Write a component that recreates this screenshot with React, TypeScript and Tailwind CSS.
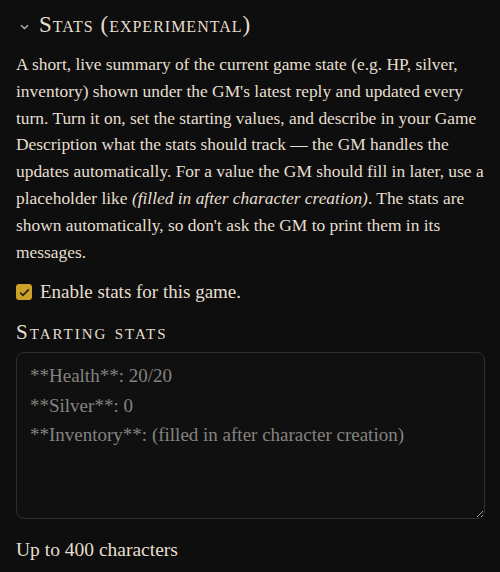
import React from "react";

export default function App() {
  const serif = { fontFamily: '"Liberation Serif", "DejaVu Serif", serif' };
  return (
    <div className="w-[500px] h-[572px] bg-[#0e0e0e] text-[#e6dfcf] overflow-hidden" style={serif}>
      <div className="px-4 pt-[10px]">
        <div className="flex items-center gap-[10px] pl-[4px]">
          <svg width="9" height="6" viewBox="0 0 9 6" className="mt-[3px]">
            <path d="M1 1.2 L4.5 4.6 L8 1.2" stroke="#b8b2a6" strokeWidth="1.4" fill="none" />
          </svg>
          <h2 className="text-[23px] leading-[30px] tracking-[1px]" style={{ fontVariant: "small-caps" }}>
            Stats (experimental)
          </h2>
        </div>
        <p className="mt-[11px] text-[17.4px] leading-[26.8px] whitespace-nowrap">
          A short, live summary of the current game state (e.g. HP, silver,<br />
          inventory) shown under the GM's latest reply and updated every<br />
          turn. Turn it on, set the starting values, and describe in your Game<br />
          Description what the stats should track — the GM handles the<br />
          updates automatically. For a value the GM should fill in later, use a<br />
          placeholder like <em>(filled in after character creation)</em>. The stats are<br />
          shown automatically, so don't ask the GM to print them in its<br />
          messages.
        </p>
        <label className="mt-[15px] flex items-center gap-[8px] text-[19px] leading-[24px]">
          <span className="w-[16px] h-[16px] rounded-[3px] bg-[#c9a227] flex items-center justify-center">
            <svg width="11" height="9" viewBox="0 0 11 9">
              <path d="M1.2 4.6 L4 7.3 L9.8 1.3" stroke="#2a2210" strokeWidth="1.8" fill="none" />
            </svg>
          </span>
          Enable stats for this game.
        </label>
        <h3 className="mt-[15px] text-[21px] leading-[26px] tracking-[2px]" style={{ fontVariant: "small-caps" }}>
          Starting stats
        </h3>
        <textarea
          className="mt-[7px] block w-[469px] h-[167px] rounded-[8px] border border-[#2e2e2e] bg-[#101010] px-[13px] py-[8px] text-[19px] leading-[29.5px] placeholder:text-[#858380] outline-none resize-y"
          style={serif}
          placeholder={"**Health**: 20/20\n**Silver**: 0\n**Inventory**: (filled in after character creation)"}
        />
        <div className="mt-[19px] text-[19.5px] leading-[24px]">Up to 400 characters</div>
      </div>
    </div>
  );
}
